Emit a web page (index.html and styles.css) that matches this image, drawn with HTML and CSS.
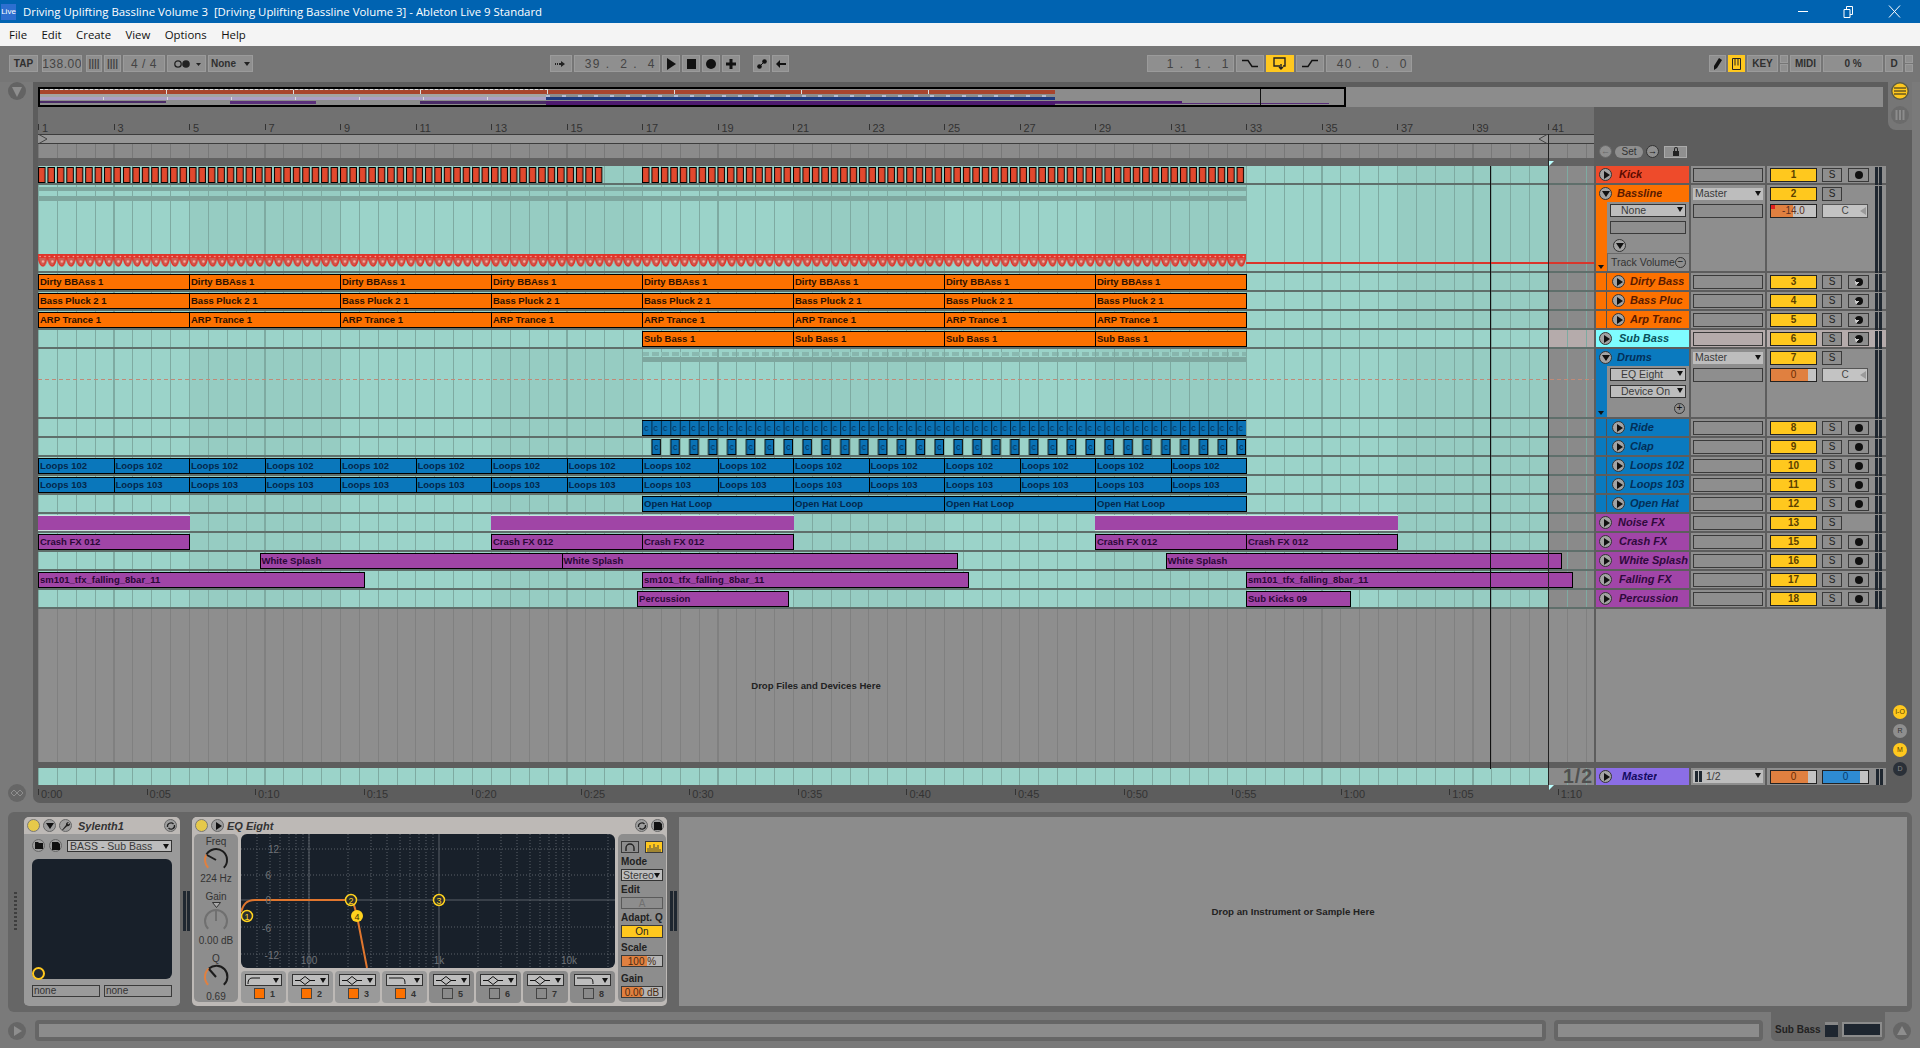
FILE: index.html
```html
<!DOCTYPE html>
<html lang="en">
<head>
  <meta charset="UTF-8" />
  <title>Driving Uplifting Bassline Volume 3 - Ableton Live 9 Standard</title>
  <link rel="stylesheet" href="styles.css">
</head>
<body>
  <header class="titlebar">
    <span class="live-logo">Live</span>
    <span class="title-text">Driving Uplifting Bassline Volume 3&nbsp; [Driving Uplifting Bassline Volume 3] - Ableton Live 9 Standard</span>
    <svg class="win-ctl" width="120" height="23" viewBox="0 0 120 23" fill="none" stroke="#fff">
      <path d="M8 11.5H18"/>
      <path d="M54 9.500h6v8h-6zM56.500 9.500v-3h6v8h-2.500"/>
      <path d="M99 5.500L110 17.500M110 5.500L99 17.500"/>
    </svg>
  </header>
  <nav class="menubar">
    <span>File</span><span>Edit</span><span>Create</span><span>View</span><span>Options</span><span>Help</span>
  </nav>

  <!-- control bar -->
  <section class="toolbar">
    <div class="btn w29 strong">TAP</div>
    <div class="btn w40 ml4 big">138.00</div>
    <div class="btn w16 ml4 big bars">||||</div>
    <div class="btn w17 big bars">||||</div>
    <div class="btn w42 big">4 / 4</div>
    <div class="btn w39">
      <svg width="30" height="10" viewBox="0 0 30 10" fill="#222"><circle cx="6" cy="5" r="3.200" fill="none" stroke="#222" stroke-width="1.300"/><circle cx="14" cy="5" r="3.800"/><path d="M24 4h5l-2.500 3z"/></svg>
    </div>
    <div class="btn w45 strong combo-btn">None</div>

    <div class="btn w22 gap-center"><svg width="12" height="8" viewBox="0 0 12 8" fill="#222"><path d="M0 3h1v2H0zM2 3h1v2H2zM4 3h2V1l4 3-4 3V5H4z"/></svg></div>
    <div class="btn w86 big num-right">39 .&nbsp; 2 .&nbsp; 4</div>
    <div class="btn w18"><svg width="10" height="12" viewBox="0 0 10 12" fill="#111"><path d="M1 0l9 6-9 6z"/></svg></div>
    <div class="btn w18"><svg width="9" height="10" viewBox="0 0 9 10" fill="#111"><path d="M0 0h9v10H0z"/></svg></div>
    <div class="btn w18"><svg width="10" height="10" viewBox="0 0 10 10" fill="#111"><circle cx="5" cy="5" r="5"/></svg></div>
    <div class="btn w18"><svg width="10" height="10" viewBox="0 0 10 10" fill="#111"><path d="M3.500 0h3v3.500H10v3H6.500V10h-3V6.500H0v-3h3.500z"/></svg></div>
    <div class="btn w17 ml13"><svg width="10" height="10" viewBox="0 0 10 10" fill="#111"><circle cx="2.500" cy="7.500" r="2.300"/><circle cx="7.500" cy="2.500" r="2.300"/><path d="M2 8L8 2" stroke="#111"/></svg></div>
    <div class="btn w17"><svg width="10" height="8" viewBox="0 0 10 8" fill="#111"><path d="M0 4l4-4v3h6v2H4v3z"/></svg></div>

    <div class="btn w87 big num-right gap-right">1 .&nbsp; 1 .&nbsp; 1</div>
    <div class="btn w28"><svg width="16" height="9" viewBox="0 0 16 9" fill="none" stroke="#111" stroke-width="1.400"><path d="M0 1.500h6l4 6h6"/></svg></div>
    <div class="btn w28 on"><svg width="14" height="13" viewBox="0 0 14 13" fill="none" stroke="#222" stroke-width="1.400"><path d="M7 9H1V1h11v8h-2"/><path d="M8 7v5M6 10l2 2 2-2"/></svg></div>
    <div class="btn w28"><svg width="16" height="9" viewBox="0 0 16 9" fill="none" stroke="#111" stroke-width="1.400"><path d="M0 7.500h6l4-6h6"/></svg></div>
    <div class="btn w86 big num-right">40 .&nbsp; 0 .&nbsp; 0</div>

    <div class="btn w17 gap-edit"><svg width="9" height="12" viewBox="0 0 9 12" fill="#111"><path d="M6 0l3 2-5 8-3 2 0-4z"/></svg></div>
    <div class="btn w17 on"><svg width="9" height="12" viewBox="0 0 9 12" fill="none" stroke="#222"><path d="M.5.5h8v11h-8zM3 .5v7M6 .5v7"/></svg></div>
    <div class="btn w31 strong">KEY</div>
    <div class="mini-stack"><i></i><i></i></div>
    <div class="btn w31 strong">MIDI</div>
    <div class="btn w60 strong">0 %</div>
    <div class="btn w18 strong">D</div>
    <div class="mini-stack"><i></i><i></i></div>
  </section>

  <main class="main">
    <aside class="side-left">
      <svg width="18" height="18" viewBox="0 0 18 18"><circle cx="9" cy="9" r="9" fill="#636363"/><path d="M4 5h10l-5 10z" fill="#8e8e8e"/></svg>
      <svg width="18" height="18" viewBox="0 0 18 18" fill="none"><circle cx="9" cy="9" r="9" fill="#666"/><path d="M3 9l3-3 3 3-3 3zM9 9l3-3 3 3-3 3z" stroke="#8e8e8e"/></svg>
    </aside>

    <section class="arrange">
      <div class="side-tab">
        <svg width="18" height="18" viewBox="0 0 18 18"><circle cx="9" cy="9" r="9" fill="#5c5c44"/><circle cx="9" cy="9" r="7.500" fill="#ffc81e"/><path d="M3 6h12M3 9h12M3 12h12" stroke="#6a5a20" stroke-width="1.300"/></svg>
        <svg width="18" height="18" viewBox="0 0 18 18"><circle cx="9" cy="9" r="9" fill="#6b6b6b"/><path d="M4.500 4v10h2V4zM8 4v10h2V4zM11.500 4v10h2V4z" fill="#8c8c8c"/></svg>
      </div>

      <div class="overview">
        <div class="ov-frame">
          <i class="ov ov-dash"></i>
          <i class="ov ov-red"></i>
          <i class="ov ov-grey"></i>
          <i class="ov ov-navy"></i>
          <i class="ov ov-dash2"></i>
          <i class="ov ov-lav"></i>
          <i class="ov ov-p1"></i>
          <i class="ov ov-p2"></i>
          <i class="ov ov-p3"></i>
          <i class="ov ov-p4"></i>
          <i class="ov ov-p5"></i>
          <i class="ov ov-p6"></i>
          <i class="ov ov-line"></i>
        </div>
      </div>

      <div class="top-row">
        <div class="timeline">
          <div class="ruler">
            <span style="--b:0">1</span><span style="--b:2">3</span><span style="--b:4">5</span><span style="--b:6">7</span><span style="--b:8">9</span><span style="--b:10">11</span><span style="--b:12">13</span><span style="--b:14">15</span><span style="--b:16">17</span><span style="--b:18">19</span><span style="--b:20">21</span><span style="--b:22">23</span><span style="--b:24">25</span><span style="--b:26">27</span><span style="--b:28">29</span><span style="--b:30">31</span><span style="--b:32">33</span><span style="--b:34">35</span><span style="--b:36">37</span><span style="--b:38">39</span><span style="--b:40">41</span>
          </div>
          <div class="brace">
            <svg class="brace-svg" width="1510" height="10" viewBox="0 0 1510 10" fill="none" stroke="#444"><path d="M1 .5L9 5 1 9.500M1509 .5L1501 5l8 4.500"/></svg>
          </div>
          <div class="locators"></div>
          <div class="band"></div>
        </div>
        <div class="setbar">
          <i class="round-btn dim">&#8592;</i>
          <span class="set-pill">Set</span>
          <i class="round-btn">&#8594;</i>
          <span class="lock">
            <svg width="8" height="9" viewBox="0 0 8 9" fill="#222"><path d="M1 4h6v5H1zM2 4V2a2 2 0 0 1 4 0v2H5V2a1 1 0 0 0-2 0v2z"/></svg>
          </span>
        </div>
      </div>

      <div class="track t-red">
        <div class="lane"><svg class="pat" x="0" y="0" width="1510" height="17"><defs><pattern id="kick" width="9.4375" height="17" patternUnits="userSpaceOnUse"><rect x=".5" y="1.500" width="6.500" height="15" fill="#e2492e" stroke="#000"/></pattern></defs><rect width="566" height="17" fill="url(#kick)"/><rect x="604" width="604" height="17" fill="url(#kick)"/></svg></div>
        <div class="head"><i class="fold"></i><b>Kick</b></div>
        <div class="send"><div class="box"></div></div>
        <div class="mix"><div class="num">1</div><div class="solo">S</div><div class="arm"></div><div class="meter"></div></div>
      </div>

      <div class="track t-orange tall-bass">
        <div class="lane">
          <i class="note-band b1"></i><i class="note-band b2"></i>
          <svg class="auto-svg" width="1208" height="14" viewBox="0 0 1208 14"><defs><pattern id="saw" width="9.4375" height="14" patternUnits="userSpaceOnUse"><path d="M0 2C1 8 3 12 5 12S8 8 9.440 2Z" fill="#e0352b" fill-opacity=".75" stroke="#e0352b" stroke-width="1.500"/><circle cx="5" cy="7.500" r="1.200" fill="#f3b6a8"/><circle cx="2" cy="2.500" r=".8" fill="#f3b6a8"/><circle cx="7" cy="2.500" r=".8" fill="#f3b6a8"/></pattern></defs><rect y="0" width="1208" height="4" fill="#e0352b"/><rect width="1208" height="14" fill="url(#saw)"/></svg>
          <i class="auto-line"></i>
        </div>
        <div class="head group">
          <div class="head-name"><i class="fold open"></i><b>Bassline</b></div>
          <div class="head-body">
            <div class="combo">None</div>
            <div class="box"></div>
            <i class="fold open small-fold"></i>
            <div class="auto-row">Track Volume<i class="round-mini">&#8722;</i></div>
            <i class="group-arrow"></i>
          </div>
        </div>
        <div class="send"><div class="combo master">Master</div><div class="box"></div></div>
        <div class="mix"><div class="num">2</div><div class="solo">S</div><div class="arm-none"></div><div class="meter"></div><div class="vol v14">-14.0</div><div class="pan">C</div></div>
      </div>

      <div class="track t-orange nest">
        <div class="lane">
          <div class="clip" style="--s:1;--n:4">Dirty BBAss 1</div><div class="clip" style="--s:5;--n:4">Dirty BBAss 1</div><div class="clip" style="--s:9;--n:4">Dirty BBAss 1</div><div class="clip" style="--s:13;--n:4">Dirty BBAss 1</div><div class="clip" style="--s:17;--n:4">Dirty BBAss 1</div><div class="clip" style="--s:21;--n:4">Dirty BBAss 1</div><div class="clip" style="--s:25;--n:4">Dirty BBAss 1</div><div class="clip" style="--s:29;--n:4">Dirty BBAss 1</div>
        </div>
        <div class="head"><i class="fold"></i><b>Dirty Bass</b></div>
        <div class="send"><div class="box"></div></div>
        <div class="mix"><div class="num">3</div><div class="solo">S</div><div class="arm midi"></div><div class="meter"></div></div>
      </div>

      <div class="track t-orange nest">
        <div class="lane">
          <div class="clip" style="--s:1;--n:4">Bass Pluck 2 1</div><div class="clip" style="--s:5;--n:4">Bass Pluck 2 1</div><div class="clip" style="--s:9;--n:4">Bass Pluck 2 1</div><div class="clip" style="--s:13;--n:4">Bass Pluck 2 1</div><div class="clip" style="--s:17;--n:4">Bass Pluck 2 1</div><div class="clip" style="--s:21;--n:4">Bass Pluck 2 1</div><div class="clip" style="--s:25;--n:4">Bass Pluck 2 1</div><div class="clip" style="--s:29;--n:4">Bass Pluck 2 1</div>
        </div>
        <div class="head"><i class="fold"></i><b>Bass Pluc</b></div>
        <div class="send"><div class="box"></div></div>
        <div class="mix"><div class="num">4</div><div class="solo">S</div><div class="arm midi"></div><div class="meter"></div></div>
      </div>

      <div class="track t-orange nest">
        <div class="lane">
          <div class="clip" style="--s:1;--n:4">ARP Trance 1</div><div class="clip" style="--s:5;--n:4">ARP Trance 1</div><div class="clip" style="--s:9;--n:4">ARP Trance 1</div><div class="clip" style="--s:13;--n:4">ARP Trance 1</div><div class="clip" style="--s:17;--n:4">ARP Trance 1</div><div class="clip" style="--s:21;--n:4">ARP Trance 1</div><div class="clip" style="--s:25;--n:4">ARP Trance 1</div><div class="clip" style="--s:29;--n:4">ARP Trance 1</div>
        </div>
        <div class="head"><i class="fold"></i><b>Arp Tranc</b></div>
        <div class="send"><div class="box"></div></div>
        <div class="mix"><div class="num">5</div><div class="solo">S</div><div class="arm midi"></div><div class="meter"></div></div>
      </div>

      <div class="track t-cyan selected">
        <div class="lane">
          <div class="clip orange" style="--s:17;--n:4">Sub Bass 1</div><div class="clip orange" style="--s:21;--n:4">Sub Bass 1</div><div class="clip orange" style="--s:25;--n:4">Sub Bass 1</div><div class="clip orange" style="--s:29;--n:4">Sub Bass 1</div>
        </div>
        <div class="head"><i class="fold"></i><b>Sub Bass</b></div>
        <div class="send"><div class="box"></div></div>
        <div class="mix"><div class="num">6</div><div class="solo">S</div><div class="arm midi"></div><div class="meter"></div></div>
      </div>

      <div class="track t-blue tall-drums">
        <div class="lane">
          <i class="note-band d1"></i><i class="note-band d2"></i>
          <i class="dash-line"></i>
        </div>
        <div class="head group">
          <div class="head-name"><i class="fold open"></i><b>Drums</b></div>
          <div class="head-body">
            <div class="combo">EQ Eight</div>
            <div class="combo">Device On</div>
            <i class="round-mini plus">+</i>
            <i class="group-arrow"></i>
          </div>
        </div>
        <div class="send"><div class="combo master">Master</div><div class="box"></div></div>
        <div class="mix"><div class="num">7</div><div class="solo">S</div><div class="arm-none"></div><div class="meter"></div><div class="vol v0">0</div><div class="pan">C</div></div>
      </div>

      <div class="track t-blue nest">
        <div class="lane"><svg class="pat ride" width="604" height="17"><defs><pattern id="ride" width="9.4375" height="17" patternUnits="userSpaceOnUse"><rect width="9.440" height="17" y="1" fill="#0a72b5"/><path d="M.5 1v17" stroke="#042a48"/><text x="2" y="12" class="pat-text">c</text></pattern></defs><rect width="604" height="17" fill="url(#ride)"/><path d="M0 1.500H604M0 16.500H604" stroke="#000"/></svg></div>
        <div class="head"><i class="fold"></i><b>Ride</b></div>
        <div class="send"><div class="box"></div></div>
        <div class="mix"><div class="num">8</div><div class="solo">S</div><div class="arm"></div><div class="meter"></div></div>
      </div>

      <div class="track t-blue nest">
        <div class="lane"><svg class="pat ride" width="604" height="17"><defs><pattern id="clap" width="18.875" height="17" patternUnits="userSpaceOnUse"><rect x="9.900" y="1.500" width="8.500" height="15" fill="#0a72b5" stroke="#000"/><text x="12" y="12" class="pat-text">c</text></pattern></defs><rect width="604" height="17" fill="url(#clap)"/></svg></div>
        <div class="head"><i class="fold"></i><b>Clap</b></div>
        <div class="send"><div class="box"></div></div>
        <div class="mix"><div class="num">9</div><div class="solo">S</div><div class="arm"></div><div class="meter"></div></div>
      </div>

      <div class="track t-blue nest">
        <div class="lane">
          <div class="clip" style="--s:1;--n:2">Loops 102</div><div class="clip" style="--s:3;--n:2">Loops 102</div><div class="clip" style="--s:5;--n:2">Loops 102</div><div class="clip" style="--s:7;--n:2">Loops 102</div><div class="clip" style="--s:9;--n:2">Loops 102</div><div class="clip" style="--s:11;--n:2">Loops 102</div><div class="clip" style="--s:13;--n:2">Loops 102</div><div class="clip" style="--s:15;--n:2">Loops 102</div><div class="clip" style="--s:17;--n:2">Loops 102</div><div class="clip" style="--s:19;--n:2">Loops 102</div><div class="clip" style="--s:21;--n:2">Loops 102</div><div class="clip" style="--s:23;--n:2">Loops 102</div><div class="clip" style="--s:25;--n:2">Loops 102</div><div class="clip" style="--s:27;--n:2">Loops 102</div><div class="clip" style="--s:29;--n:2">Loops 102</div><div class="clip" style="--s:31;--n:2">Loops 102</div>
        </div>
        <div class="head"><i class="fold"></i><b>Loops 102</b></div>
        <div class="send"><div class="box"></div></div>
        <div class="mix"><div class="num">10</div><div class="solo">S</div><div class="arm"></div><div class="meter"></div></div>
      </div>

      <div class="track t-blue nest">
        <div class="lane">
          <div class="clip" style="--s:1;--n:2">Loops 103</div><div class="clip" style="--s:3;--n:2">Loops 103</div><div class="clip" style="--s:5;--n:2">Loops 103</div><div class="clip" style="--s:7;--n:2">Loops 103</div><div class="clip" style="--s:9;--n:2">Loops 103</div><div class="clip" style="--s:11;--n:2">Loops 103</div><div class="clip" style="--s:13;--n:2">Loops 103</div><div class="clip" style="--s:15;--n:2">Loops 103</div><div class="clip" style="--s:17;--n:2">Loops 103</div><div class="clip" style="--s:19;--n:2">Loops 103</div><div class="clip" style="--s:21;--n:2">Loops 103</div><div class="clip" style="--s:23;--n:2">Loops 103</div><div class="clip" style="--s:25;--n:2">Loops 103</div><div class="clip" style="--s:27;--n:2">Loops 103</div><div class="clip" style="--s:29;--n:2">Loops 103</div><div class="clip" style="--s:31;--n:2">Loops 103</div>
        </div>
        <div class="head"><i class="fold"></i><b>Loops 103</b></div>
        <div class="send"><div class="box"></div></div>
        <div class="mix"><div class="num">11</div><div class="solo">S</div><div class="arm"></div><div class="meter"></div></div>
      </div>

      <div class="track t-blue nest">
        <div class="lane">
          <div class="clip" style="--s:17;--n:4">Open Hat Loop</div><div class="clip" style="--s:21;--n:4">Open Hat Loop</div><div class="clip" style="--s:25;--n:4">Open Hat Loop</div><div class="clip" style="--s:29;--n:4">Open Hat Loop</div>
        </div>
        <div class="head"><i class="fold"></i><b>Open Hat</b></div>
        <div class="send"><div class="box"></div></div>
        <div class="mix"><div class="num">12</div><div class="solo">S</div><div class="arm"></div><div class="meter"></div></div>
      </div>

      <div class="track t-purple">
        <div class="lane">
          <div class="clip plain" style="--s:1;--n:4"></div><div class="clip plain" style="--s:13;--n:8"></div><div class="clip plain" style="--s:29;--n:8"></div>
        </div>
        <div class="head group-top"><i class="fold"></i><b>Noise FX</b></div>
        <div class="send"><div class="box"></div></div>
        <div class="mix"><div class="num">13</div><div class="solo">S</div><div class="arm-none"></div><div class="meter"></div></div>
      </div>

      <div class="track t-purple">
        <div class="lane">
          <div class="clip" style="--s:1;--n:4">Crash FX 012</div><div class="clip" style="--s:13;--n:4">Crash FX 012</div><div class="clip" style="--s:17;--n:4">Crash FX 012</div><div class="clip" style="--s:29;--n:4">Crash FX 012</div><div class="clip" style="--s:33;--n:4">Crash FX 012</div>
        </div>
        <div class="head"><i class="fold"></i><b>Crash FX</b></div>
        <div class="send"><div class="box"></div></div>
        <div class="mix"><div class="num">15</div><div class="solo">S</div><div class="arm"></div><div class="meter"></div></div>
      </div>

      <div class="track t-purple">
        <div class="lane">
          <div class="clip" style="--s:6.87;--n:8">White Splash</div><div class="clip" style="--s:14.87;--n:10.48">White Splash</div><div class="clip" style="--s:30.87;--n:10.48">White Splash</div>
        </div>
        <div class="head"><i class="fold"></i><b>White Splash</b></div>
        <div class="send"><div class="box"></div></div>
        <div class="mix"><div class="num">16</div><div class="solo">S</div><div class="arm"></div><div class="meter"></div></div>
      </div>

      <div class="track t-purple">
        <div class="lane">
          <div class="clip" style="--s:1;--n:8.63">sm101_tfx_falling_8bar_11</div><div class="clip" style="--s:17;--n:8.63">sm101_tfx_falling_8bar_11</div><div class="clip" style="--s:33;--n:8.63">sm101_tfx_falling_8bar_11</div>
        </div>
        <div class="head"><i class="fold"></i><b>Falling FX</b></div>
        <div class="send"><div class="box"></div></div>
        <div class="mix"><div class="num">17</div><div class="solo">S</div><div class="arm"></div><div class="meter"></div></div>
      </div>

      <div class="track t-purple">
        <div class="lane">
          <div class="clip" style="--s:16.87;--n:4">Percussion</div><div class="clip" style="--s:33;--n:2.75">Sub Kicks 09</div>
        </div>
        <div class="head"><i class="fold"></i><b>Percussion</b></div>
        <div class="send"><div class="box"></div></div>
        <div class="mix"><div class="num">18</div><div class="solo">S</div><div class="arm"></div><div class="meter"></div></div>
      </div>

      <div class="drop-row">
        <div class="drop-lane">Drop Files and Devices Here</div>
        <div class="drop-head"></div>
      </div>
      <div class="band-row"><div class="band-lane"></div></div>

      <div class="track t-master master-row">
        <div class="lane"><span class="ratio">1/2</span></div>
        <div class="head"><i class="fold"></i><b>Master</b></div>
        <div class="send"><div class="combo master cue"><i class="cue-meter"></i>1/2</div></div>
        <div class="mix"><div class="vol v0">0</div><div class="vol vb">0</div><div class="meter"></div></div>
      </div>

      <div class="time-ruler">
        <span style="--t:0">0:00</span><span style="--t:1">0:05</span><span style="--t:2">0:10</span><span style="--t:3">0:15</span><span style="--t:4">0:20</span><span style="--t:5">0:25</span><span style="--t:6">0:30</span><span style="--t:7">0:35</span><span style="--t:8">0:40</span><span style="--t:9">0:45</span><span style="--t:10">0:50</span><span style="--t:11">0:55</span><span style="--t:12">1:00</span><span style="--t:13">1:05</span><span style="--t:14">1:10</span>
      </div>

      <!-- lines over the lanes -->
      <i class="line-play"></i>
      <i class="line-end"></i>
      <i class="corner c-top"></i>
      <i class="corner c-bot"></i>

      <div class="side-right">
        <i class="dot yellow">I-O</i>
        <i class="dot grey">R</i>
        <i class="dot yellow">M</i>
        <i class="dot dark">D</i>
      </div>
    </section>
  </main>

  <!-- device view -->
  <section class="detail">
    <div class="grip"></div>
    <div class="device synth">
      <div class="dev-title">
        <i class="led"></i><i class="fold open grey"></i>
        <i class="fold grey wrench"><svg width="10" height="10" viewBox="0 0 10 10" fill="#222"><path d="M1 9l4-5a2.500 2.500 0 0 1 3-3L6.500 2.500 7.500 3.500 9 2a2.500 2.500 0 0 1-3 3.200L2 9z"/></svg></i>
        <b>Sylenth1</b>
        <i class="fold grey ico-r"><svg width="10" height="10" viewBox="0 0 10 10" fill="none" stroke="#222" stroke-width="1.300"><path d="M1.500 6a3.500 3.500 0 0 1 6-3M8.500 4a3.500 3.500 0 0 1-6 3"/></svg></i>
      </div>
      <div class="synth-body">
        <div class="synth-top">
          <i class="fold grey"><svg width="8" height="7" viewBox="0 0 8 7" fill="#111"><path d="M0 0h3l1 1h4v6H0z"/></svg></i>
          <i class="fold grey"><svg width="8" height="8" viewBox="0 0 8 8" fill="#111"><path d="M0 0h6l2 2v6H0z"/></svg></i>
          <div class="combo preset">BASS - Sub Bass</div>
        </div>
        <div class="xy"><i class="xy-dot"></i></div>
        <div class="macros"><div>none</div><div>none</div></div>
      </div>
    </div>
    <div class="meter dev-meter"></div>
    <div class="device eq">
      <div class="dev-title">
        <i class="led"></i><i class="fold grey"></i>
        <b>EQ Eight</b>
        <i class="fold grey ico-r"><svg width="10" height="10" viewBox="0 0 10 10" fill="none" stroke="#222" stroke-width="1.300"><path d="M1.500 6a3.500 3.500 0 0 1 6-3M8.500 4a3.500 3.500 0 0 1-6 3"/></svg></i>
        <i class="fold grey"><svg width="8" height="8" viewBox="0 0 8 8" fill="#111"><path d="M0 0h6l2 2v6H0z"/></svg></i>
      </div>
      <div class="eq-body">
        <div class="eq-knobs">
          <span>Freq</span>
          <svg class="knob k1" width="28" height="28" viewBox="0 0 28 28" fill="none" stroke-width="2"><path d="M6.200 21.800A11 11 0 0 1 4.500 8.500" stroke="#e08040"/><path d="M4.500 8.500A11 11 0 1 1 21.800 21.800" stroke="#1c1c1c"/><path d="M14 14L5 9" stroke="#1c1c1c"/></svg>
          <span>224 Hz</span>
          <span class="mt5">Gain</span>
          <svg class="knob-tri" width="9" height="6" viewBox="0 0 9 6" fill="#aaa" stroke="#333"><path d="M.5.500h8L4.500 5.500z"/></svg>
          <svg class="knob" width="28" height="28" viewBox="0 0 28 28" fill="none" stroke-width="2"><path d="M6.200 21.800A11 11 0 1 1 21.800 21.800" stroke="#707070"/><path d="M14 14V3" stroke="#707070"/></svg>
          <span>0.00 dB</span>
          <span class="mt5">Q</span>
          <svg class="knob" width="28" height="28" viewBox="0 0 28 28" fill="none" stroke-width="2"><path d="M6.200 21.800A11 11 0 0 1 7 5.500" stroke="#e08040"/><path d="M7 5.500A11 11 0 1 1 21.800 21.800" stroke="#1c1c1c"/><path d="M14 14L7 6" stroke="#1c1c1c"/></svg>
          <span>0.69</span>
        </div>
        <div class="eq-mid">
          <svg class="eq-graph" width="374" height="134" viewBox="0 0 374 134" fill="none">
            <path class="g-dot" d="M16 0V134M29 0V134M39 0V134M48 0V134M55 0V134M62 0V134M68 0V134M107 0V134M130 0V134M146 0V134M159 0V134M169 0V134M178 0V134M185 0V134M192 0V134M237 0V134M260 0V134M276 0V134M289 0V134M299 0V134M308 0V134M315 0V134M322 0V134M328 0V134M367 0V134"/>
            <path class="g-dot" d="M0 15H374M0 41H374M0 93H374M0 120H374"/>
            <path class="g-line" d="M0 66H374M68 0V134M198 0V134"/>
            <path d="M0 78C2 71 5 66 14 66H108C112 66 113 70 116 82L126 134" stroke="#e0762e" stroke-width="2"/>
            <g class="g-label">
              <text x="38" y="19" text-anchor="end">12</text><text x="30" y="45" text-anchor="end">6</text><text x="30" y="70" text-anchor="end">0</text><text x="30" y="98" text-anchor="end">-6</text><text x="38" y="125" text-anchor="end">-12</text>
              <text x="68" y="130" text-anchor="middle">100</text><text x="198" y="130" text-anchor="middle">1k</text><text x="328" y="130" text-anchor="middle">10k</text>
            </g>
            <g class="node ring"><circle cx="6" cy="82" r="5.500"/><text x="6" y="85.500">1</text></g>
            <g class="node ring"><circle cx="110" cy="66" r="5.500"/><text x="110" y="69.500">2</text></g>
            <g class="node ring"><circle cx="198" cy="66" r="5.500"/><text x="198" y="69.500">3</text></g>
            <g class="node solid"><circle cx="116" cy="82" r="6"/><text x="116" y="85.500">4</text></g>
          </svg>
          <div class="bands">
            <div class="band-cell on"><div class="combo filt"><svg width="26" height="9" viewBox="0 0 26 9" fill="none" stroke="#111"><path d="M1 8c0-5 2-6 5-6h7"/></svg></div><div class="band-foot"><i class="chk on"></i><b>1</b></div></div>
            <div class="band-cell on"><div class="combo filt"><svg width="26" height="9" viewBox="0 0 26 9" fill="none" stroke="#111"><path d="M1 4.500h5l5-4 5 4 5 0M6 4.500l5 4 5-4"/></svg></div><div class="band-foot"><i class="chk on"></i><b>2</b></div></div>
            <div class="band-cell on"><div class="combo filt"><svg width="26" height="9" viewBox="0 0 26 9" fill="none" stroke="#111"><path d="M1 4.500h5l5-4 5 4 5 0M6 4.500l5 4 5-4"/></svg></div><div class="band-foot"><i class="chk on"></i><b>3</b></div></div>
            <div class="band-cell on"><div class="combo filt"><svg width="26" height="9" viewBox="0 0 26 9" fill="none" stroke="#111"><path d="M1 2h12c3 0 4 1 4 6"/></svg></div><div class="band-foot"><i class="chk on"></i><b>4</b></div></div>
            <div class="band-cell"><div class="combo filt"><svg width="26" height="9" viewBox="0 0 26 9" fill="none" stroke="#111"><path d="M1 4.500h5l5-4 5 4 5 0M6 4.500l5 4 5-4"/></svg></div><div class="band-foot"><i class="chk"></i><b>5</b></div></div>
            <div class="band-cell"><div class="combo filt"><svg width="26" height="9" viewBox="0 0 26 9" fill="none" stroke="#111"><path d="M1 4.500h5l5-4 5 4 5 0M6 4.500l5 4 5-4"/></svg></div><div class="band-foot"><i class="chk"></i><b>6</b></div></div>
            <div class="band-cell"><div class="combo filt"><svg width="26" height="9" viewBox="0 0 26 9" fill="none" stroke="#111"><path d="M1 4.500h5l5-4 5 4 5 0M6 4.500l5 4 5-4"/></svg></div><div class="band-foot"><i class="chk"></i><b>7</b></div></div>
            <div class="band-cell"><div class="combo filt"><svg width="26" height="9" viewBox="0 0 26 9" fill="none" stroke="#111"><path d="M1 2h12c3 0 4 1 4 6"/></svg></div><div class="band-foot"><i class="chk"></i><b>8</b></div></div>
          </div>
        </div>
        <div class="eq-side">
          <div class="eq-btns">
            <div class="bx"><svg width="10" height="9" viewBox="0 0 10 9" fill="none" stroke="#222" stroke-width="1.400"><path d="M1 8V5a4 4 0 0 1 8 0v3"/></svg></div>
            <div class="bx yellow"><svg width="14" height="9" viewBox="0 0 14 9" stroke="#444"><path d="M1 9V5M3 9V2M5 9V5M7 9V1M9 9V4M11 9V2M13 9V6"/></svg></div>
          </div>
          <label>Mode</label><div class="combo stereo">Stereo</div>
          <label>Edit</label><div class="bx wide dim">A</div>
          <label>Adapt. Q</label><div class="bx wide yellow">On</div>
          <label class="lb-scale">Scale</label><div class="bx wide fill-scale">100 %</div>
          <label class="lb-gain">Gain</label><div class="bx wide fill-gain">0.00 dB</div>
        </div>
      </div>
    </div>
    <div class="meter dev-meter"></div>
    <div class="dropzone">Drop an Instrument or Sample Here</div>
  </section>

  <footer class="status">
    <svg class="st-ico" width="18" height="18" viewBox="0 0 18 18"><circle cx="9" cy="9" r="9" fill="#666"/><path d="M6 4l8 5-8 5z" fill="#8e8e8e"/></svg>
    <div class="st-field f1"></div>
    <div class="st-field f2"></div>
    <div class="st-tab">
      <b>Sub Bass</b>
      <i class="st-mini"></i>
      <i class="st-cpu"></i>
    </div>
    <svg class="st-ico" width="18" height="18" viewBox="0 0 18 18"><circle cx="9" cy="9" r="9" fill="#666"/><path d="M9 4l5 9H4z" fill="#8e8e8e"/></svg>
  </footer>
</body>
</html>
```

FILE: styles.css
```css
* {
  box-sizing: border-box;
}
:root {
  --bar: 37.75px;
  --teal: #9ad2c8;
  --ui: "Liberation Sans", Arial, sans-serif;
}
body {
  margin: 0;
  width: 1920px;
  height: 1048px;
  overflow: hidden;
  display: flex;
  flex-direction: column;
  background: #7a7a7a;
  font-family: var(--ui);
  color: #222;
}
i {
  font-style: normal;
  display: block;
}

/* window chrome */
.titlebar {
  height: 23px;
  flex: none;
  background: #0063b1;
  color: #fff;
  display: flex;
  align-items: center;
  font: 11.400px "Open Sans", sans-serif;
  padding: 0 10px 0 1px;
}
.live-logo {
  width: 15px;
  height: 16px;
  background: #2d6fd0;
  font: 8px var(--ui);
  text-align: center;
  line-height: 16px;
  margin-right: 7px;
}
.title-text {
  flex: 1;
}
.win-ctl {
  flex: none;
}
.menubar {
  height: 23px;
  flex: none;
  background: #f4f4f4;
  display: flex;
  align-items: center;
  padding-left: 9px;
  gap: 14.400px;
  font: 11.400px "Open Sans", sans-serif;
  color: #111;
}

/* control bar */
.toolbar {
  height: 36px;
  flex: none;
  background: #767676;
  display: flex;
  align-items: flex-start;
  padding: 9px 0 0 9px;
  gap: 2px;
}
.btn {
  height: 17px;
  flex: none;
  background: #8f8f8f;
  border: 1px solid #9b9b9b;
  display: flex;
  align-items: center;
  justify-content: center;
  font-size: 10px;
  color: #2c2c2c;
  white-space: nowrap;
  overflow: hidden;
}
.btn.big {
  font-size: 12px;
  letter-spacing: .5px;
  color: #444;
}
.btn.bars {
  font-size: 10px;
  font-weight: bold;
  letter-spacing: 0;
}
.btn.strong {
  font-weight: bold;
  color: #303030;
}
.btn.on {
  background: #ffc81e;
  border-color: #ffc81e;
}
.btn.num-right {
  justify-content: flex-end;
  padding-right: 3px;
  letter-spacing: 1.500px;
}
.combo-btn::after {
  content: "";
  margin-left: 8px;
  border: 3px solid transparent;
  border-top: 4px solid #222;
  border-bottom: 0;
}
.w16 { width: 16px; }
.w17 { width: 17px; }
.w18 { width: 18px; }
.w22 { width: 22px; }
.w28 { width: 28px; }
.w29 { width: 29px; }
.w31 { width: 31px; }
.w39 { width: 39px; }
.w40 { width: 40px; }
.w42 { width: 42px; }
.w45 { width: 45px; }
.w60 { width: 60px; }
.w86 { width: 86px; }
.w87 { width: 87px; }
.ml4 { margin-left: 2px; }
.ml13 { margin-left: 11px; }
.gap-center { margin-left: 295px; }
.gap-right { margin-left: 356px; }
.gap-edit { margin-left: 295px; }
.mini-stack {
  width: 8px;
  height: 17px;
  display: flex;
  flex-direction: column;
  gap: 1px;
  flex: none;
}
.mini-stack i {
  flex: 1;
  background: #8f8f8f;
  border: 1px solid #9b9b9b;
}

/* arrangement */
.main {
  height: 721px;
  flex: none;
  display: flex;
}
.side-left {
  width: 33px;
  flex: none;
  display: flex;
  flex-direction: column;
  justify-content: space-between;
  align-items: center;
  padding: 0 0 1px 2px;
  margin-right: 0;
}
.side-left svg {
  margin-top: 0;
  margin-right: 2px;
}
.arrange {
  width: 1879px;
  flex: none;
  background: #5d5d5d;
  border-radius: 0 0 7px 7px;
  position: relative;
  padding: 5px 0 0 5px;
  display: flex;
  flex-direction: column;
}
.side-tab {
  position: absolute;
  right: 0;
  top: 0;
  width: 24px;
  height: 48px;
  background: #767676;
  border-radius: 0 0 0 8px;
  padding-top: 0;
  display: flex;
  flex-direction: column;
  align-items: center;
  gap: 6px;
}
.overview {
  height: 20px;
  width: 1845px;
  flex: none;
  background: #8c8c8c;
}
.ov-frame {
  width: 1308px;
  height: 20px;
  border: 2px solid #000;
  position: relative;
}
.ov {
  position: absolute;
}
.ov-dash { left: 0; top: 0; width: 508px; height: 1px; background: repeating-linear-gradient(90deg, #ddd 0 3px, transparent 3px 5px); }
.ov-red { left: 0; top: 1px; width: 1015px; height: 4px; background: repeating-linear-gradient(90deg, #a8452e 0 126px, #ddd 126px 127px); }
.ov-grey { left: 0; top: 5px; width: 506px; height: 3px; background: #a4a4a4; }
.ov-navy { left: 506px; top: 6px; width: 509px; height: 5px; background: #1f3a80; }
.ov-dash2 { left: 506px; top: 6px; width: 509px; height: 2px; background: repeating-linear-gradient(90deg, #b9bdd0 0 4px, #8c8c8c 4px 16px); }
.ov-lav { left: 0; top: 8px; width: 506px; height: 3px; background: repeating-linear-gradient(90deg, #ab9fc6 0 63px, #ddd 63px 64px); }
.ov-p1 { left: 0; top: 12px; width: 126px; height: 2px; background: #4a2b66; }
.ov-p2 { left: 190px; top: 12px; width: 86px; height: 3px; background: #5a2f7a; }
.ov-p3 { left: 380px; top: 12px; width: 126px; height: 3px; background: #4a2b66; }
.ov-p4 { left: 506px; top: 12px; width: 509px; height: 4px; background: #4e1a70; }
.ov-p5 { left: 1015px; top: 12px; width: 127px; height: 2px; background: #4e1a70; }
.ov-p6 { left: 1015px; top: 14px; width: 274px; height: 1px; background: #5a2f7a; }
.ov-line { left: 1220px; top: 0; width: 1px; height: 16px; background: #111; }

.top-row {
  display: flex;
  height: 59px;
  flex: none;
}
.timeline {
  width: 1556px;
  flex: none;
}
.ruler {
  height: 27px;
  background: #717171;
  position: relative;
}
.ruler span {
  position: absolute;
  left: calc(var(--b) * var(--bar));
  bottom: 0;
  height: 12px;
  font-size: 11px;
  line-height: 12px;
  padding-left: 4px;
  color: #333;
}
.ruler span::before,
.time-ruler span::before {
  content: "";
  position: absolute;
  left: 0;
  top: 2px;
  width: 1px;
  height: 6px;
  background: #333;
}
.brace {
  height: 10px;
  background: linear-gradient(90deg, #969696 0 1510px, #8b8b8b 1510px);
  border-top: 1px solid #3c3c3c;
  border-bottom: 1px solid #3c3c3c;
  position: relative;
}
.brace-svg {
  position: absolute;
  left: 0;
  top: -1px;
}
.locators {
  height: 14px;
  background: repeating-linear-gradient(90deg, #787878 0 1px, transparent 1px 18.875px), #8b8b8b;
}
.band {
  height: 8px;
  background: #626262;
}
.setbar {
  display: flex;
  align-items: center;
  height: 13px;
  margin: 38px 0 0 2px;
  padding-left: 3px;
  gap: 3px;
}
.round-btn {
  width: 13px;
  height: 13px;
  border-radius: 50%;
  background: #8f8f8f;
  border: 1px solid #333;
  font: bold 9px/10px var(--ui);
  text-align: center;
  color: #111;
}
.round-btn.dim {
  color: #666;
  border-color: #6a6a6a;
}
.set-pill {
  width: 28px;
  height: 12px;
  border-radius: 6px;
  background: #8f8f8f;
  font-size: 10px;
  line-height: 12px;
  text-align: center;
  color: #333;
}
.lock {
  width: 23px;
  height: 12px;
  background: #8f8f8f;
  border: 1px solid #aaa;
  margin-left: 2px;
  display: flex;
  align-items: center;
  justify-content: center;
}

/* tracks */
.track {
  display: flex;
  height: 19px;
  flex: none;
}
.tall-bass { height: 88px; }
.tall-drums { height: 70px; }
.lane {
  width: 1556px;
  flex: none;
  position: relative;
  border-bottom: 2px solid #5f6f6b;
  background:
    repeating-linear-gradient(90deg, #7eaaa1 0 1px, transparent 1px 18.875px),
    linear-gradient(90deg, transparent 0 1510px, #8a8a8a 1510px),
    repeating-linear-gradient(90deg, #9bd3c9 0 151px, #96ccc2 151px 302px);
}
.selected .lane {
  background:
    repeating-linear-gradient(90deg, #7eaaa1 0 1px, transparent 1px 18.875px),
    linear-gradient(90deg, transparent 0 1510px, #b5abab 1510px),
    #9bd3c9;
}
.head {
  width: 93px;
  flex: none;
  margin-left: 2px;
  display: flex;
  align-items: center;
  height: 17px;
  padding-left: 3px;
  background: var(--c);
}
.head b {
  margin-left: 7px;
  font: italic bold 11px/17px var(--ui);
  color: var(--ink);
  white-space: nowrap;
  overflow: hidden;
}
.nest .head {
  padding-left: 16px;
  background: linear-gradient(90deg, var(--c) 0 10px, #0002 10px 11px, var(--c) 11px);
}
.nest .head b {
  margin-left: 5px;
}
.head.group {
  display: block;
  height: auto;
  padding-left: 0;
  background: linear-gradient(90deg, var(--c) 0 11px, #8e8e8e 11px);
  margin-bottom: 2px;
}
.head.group-top b {
  margin-left: 6px;
}
.head-name {
  height: 17px;
  background: var(--c);
  display: flex;
  align-items: center;
  padding-left: 3px;
}
.head-name b {
  margin-left: 5px;
}
.head-body {
  position: relative;
  padding: 2px 3px 0 14px;
  display: flex;
  flex-direction: column;
  gap: 4px;
  height: calc(100% - 17px);
}
.head-body .combo {
  height: 13px;
  line-height: 11px;
}
.head-body .combo::after {
  top: 2px;
}
.head-body .box {
  width: 100%;
  height: 13px;
  margin: 0;
}
.small-fold {
  margin: 1px 0 0 3px;
}
.auto-row {
  position: absolute;
  left: 11px;
  right: 0;
  bottom: 0;
  height: 18px;
  border-top: 1px solid #6a6a6a;
  border-left: 1px solid #6a6a6a;
  font-size: 10.500px;
  line-height: 17px;
  padding-left: 3px;
  color: #333;
  white-space: nowrap;
}
.round-mini {
  width: 11px;
  height: 11px;
  border: 1px solid #333;
  border-radius: 50%;
  font: 10px/8px var(--ui);
  text-align: center;
  color: #111;
  background: #8e8e8e;
}
.auto-row .round-mini {
  position: absolute;
  right: 3px;
  top: 3px;
}
.round-mini.plus {
  position: absolute;
  right: 4px;
  bottom: 3px;
}
.group-arrow {
  position: absolute;
  left: 2px;
  bottom: 2px;
  border: 3.500px solid transparent;
  border-top: 4px solid #111;
  border-bottom: 0;
}
.fold {
  width: 13px;
  height: 13px;
  flex: none;
  border-radius: 50%;
  background: #a3a3a3;
  border: 1px solid #333;
  position: relative;
  display: flex;
  align-items: center;
  justify-content: center;
}
.fold:empty::after {
  content: "";
  border-left: 6px solid #111;
  border-top: 4px solid transparent;
  border-bottom: 4px solid transparent;
  margin-left: 2px;
}
.fold.open:empty::after {
  border-top: 6px solid #111;
  border-left: 4px solid transparent;
  border-right: 4px solid transparent;
  border-bottom: 0;
  margin: 1px 0 0;
}
.fold.grey {
  background: #9e9e9e;
  border-color: #666;
}
.send {
  width: 74px;
  flex: none;
  margin-left: 2px;
  padding: 2px 2px 0;
  background: #8e8e8e;
  display: flex;
  flex-direction: column;
  gap: 3px;
  height: calc(100% - 2px);
}
.box {
  height: 14px;
  flex: none;
  border: 1px solid #3a3a3a;
  background: #8e8e8e;
}
.selected .send,
.selected .send .box,
.selected .mix {
  background: #b5abab;
}
.mix {
  width: 119px;
  flex: none;
  margin-left: 2px;
  padding: 2px 0 0 3px;
  background: #8e8e8e;
  height: calc(100% - 2px);
  display: grid;
  grid-template-columns: 47px 20px 21px 7px;
  grid-auto-rows: 14px;
  column-gap: 5px;
  row-gap: 3px;
}
.num {
  background: #ffc81e;
  border: 1px solid #222;
  font: bold 10px/12px var(--ui);
  text-align: center;
  color: #5a4000;
}
.solo {
  background: #8e8e8e;
  border: 1px solid #3a3a3a;
  font: 10px/12px var(--ui);
  text-align: center;
  color: #222;
}
.arm {
  margin-left: 1px;
  width: 21px;
  background: #8e8e8e;
  border: 1px solid #3a3a3a;
  position: relative;
}
.arm::after {
  content: "";
  position: absolute;
  left: 6px;
  top: 2px;
  width: 8px;
  height: 8px;
  border-radius: 50%;
  background: #111;
}
.arm.midi::after {
  background: conic-gradient(#111 0 60%, #ccc 60% 78%, #111 78%);
}
.meter {
  margin-left: 2px;
  width: 7px;
  grid-column: 4;
  grid-row: 1 / span 9;
  height: 100%;
  background: linear-gradient(90deg, #1f2730 0 3px, transparent 3px 4px, #1f2730 4px);
}
.mix .meter {
  height: calc(100% + 2px);
  margin-top: -1px;
}
.vol {
  border: 1px solid #222;
  font: 10px/12px var(--ui);
  text-align: center;
  color: #6a2a00;
  background: #c3c3c3;
}
.vol.v14 {
  background: linear-gradient(90deg, #e08040 0 48%, #c3c3c3 48%);
  color: #5a3020;
  position: relative;
}
.vol.v14::before {
  content: "";
  position: absolute;
  left: 0;
  top: 0;
  width: 4px;
  height: 4px;
  background: #e02020;
}
.vol.v0 {
  background: linear-gradient(90deg, #e08040 0 83%, #c3c3c3 83%);
}
.vol.vb {
  color: #063a6a;
  background: linear-gradient(90deg, #2e8bd2 0 83%, #c3c3c3 83%);
}
.pan {
  grid-column: 2 / 4;
  border: 1px solid #555;
  font: 10px/12px var(--ui);
  text-align: center;
  color: #444;
  background: #c3c3c3;
  position: relative;
}
.pan::after {
  content: "";
  position: absolute;
  right: 1px;
  top: 2px;
  border: 4px solid transparent;
  border-right: 6px solid #9a9a9a;
  border-left: 0;
}

.t-red { --c: #ee4b2b; --ink: #5c0c00; }
.t-orange { --c: #fd7100; --ink: #5a1a00; --clip: #fd7100; }
.t-cyan { --c: #7ffcff; --ink: #06505a; }
.t-blue { --c: #0a7abf; --ink: #032f58; --clip: #0a77bb; }
.t-purple { --c: #a145a8; --ink: #2f0a3c; --clip: #a045a6; }
.t-master { --c: #8b6ee6; --ink: #120a60; }

/* clips */
.clip {
  position: absolute;
  top: 1px;
  left: calc((var(--s) - 1) * var(--bar));
  width: calc(var(--n) * var(--bar) + 1px);
  height: 16px;
  background: var(--clip);
  border: 1px solid #000;
  font: bold 9.500px/14px var(--ui);
  padding-left: 1px;
  color: #2c1000;
  white-space: nowrap;
  overflow: hidden;
}
.clip.orange {
  background: #fd7100;
}
.t-blue .clip {
  color: #03284c;
}
.t-purple .clip {
  color: #2a0836;
}
.clip.plain {
  border: 0;
  border-top: 1px solid #cfe3df;
  border-bottom: 1px solid #cfe3df;
}
.pat {
  position: absolute;
  left: 0;
  top: 0;
}
.pat.ride {
  left: 604px;
}
.pat-text {
  font: 9px var(--ui);
  fill: #03284c;
}
.note-band {
  position: absolute;
  left: 0;
  width: 1208px;
  background: #7ea79f;
}
.b1 { top: 2px; height: 4px; }
.b2 { top: 11px; height: 5px; }
.d1, .d2 {
  left: 604px;
  width: 604px;
}
.d1 {
  top: 3px;
  height: 4px;
  background: repeating-linear-gradient(90deg, #7ea79f 0 7px, #9ad2c8 7px 10px);
  opacity: .6;
}
.d2 { top: 8px; height: 5px; }
.auto-svg {
  position: absolute;
  left: 0;
  top: 69px;
}
.auto-line {
  position: absolute;
  left: 1208px;
  right: 0;
  top: 77px;
  height: 2px;
  background: #d9352b;
}
.dash-line {
  position: absolute;
  left: 0;
  right: 0;
  top: 30px;
  height: 1px;
  background: repeating-linear-gradient(90deg, #c08a78 0 4px, transparent 4px 7px);
}

/* combos */
.combo {
  height: 14px;
  flex: none;
  background: #bdbdbd;
  border: 1px solid #333;
  font-size: 10.500px;
  line-height: 12px;
  color: #3a3a3a;
  position: relative;
  padding-left: 10px;
  white-space: nowrap;
  overflow: hidden;
}
.combo::after {
  content: "";
  position: absolute;
  right: 2px;
  top: 3px;
  border: 3.500px solid transparent;
  border-top: 5px solid #111;
  border-bottom: 0;
}
.combo.master {
  height: 12px;
  line-height: 11px;
  padding-left: 2px;
  border: 0;
  margin-bottom: 1px;
  margin-top: 1px;
}
.combo.cue {
  display: flex;
  align-items: center;
  gap: 4px;
  margin-top: 0;
  height: 13px;
}
.cue-meter {
  width: 7px;
  height: 11px;
  background: linear-gradient(90deg, #1f2730 0 3px, transparent 3px 4px, #1f2730 4px);
}

.drop-row {
  flex: 1;
  display: flex;
  min-height: 0;
}
.drop-lane {
  width: 1556px;
  flex: none;
  display: flex;
  align-items: center;
  justify-content: center;
  background: repeating-linear-gradient(90deg, #808080 0 1px, transparent 1px 18.875px), #8e8e8e;
  font: bold 9.600px var(--ui);
  color: #222;
  padding-bottom: 0;
}
.drop-head {
  width: 290px;
  margin-left: 2px;
  background: #8e8e8e;
}
.band-row {
  height: 6px;
  flex: none;
}
.master-row {
  height: 17px;
}
.master-row .lane {
  border: 0;
  background:
    repeating-linear-gradient(90deg, #7eaaa1 0 1px, transparent 1px 18.875px),
    linear-gradient(90deg, transparent 0 1510px, #8a8a8a 1510px),
    #9bd3c9;
  height: 17px;
}
.master-row .send,
.master-row .mix {
  height: 17px;
}
.master-row .send {
  padding-top: 2px;
}
.master-row .mix {
  grid-template-columns: 47px 47px 7px;
}
.master-row .meter {
  grid-column: 3;
  grid-row: 1;
}
.master-row .head b {
  margin-left: 10px;
}
.ratio {
  position: absolute;
  right: 1px;
  top: -2px;
  font: bold 19.500px/20px var(--ui);
  letter-spacing: 1px;
  color: #505050;
}
.time-ruler {
  height: 18px;
  flex: none;
  position: relative;
  width: 1556px;
  color: #333;
}
.time-ruler span {
  position: absolute;
  left: calc(var(--t) * 108.55px);
  top: 2px;
  height: 12px;
  padding-left: 3px;
  font-size: 11px;
  line-height: 15px;
}
.line-play,
.line-end {
  position: absolute;
  width: 1px;
  background: #111;
}
.line-play {
  left: 1457px;
  top: 84px;
  height: 603px;
}
.line-end {
  left: 1515px;
  top: 52px;
  height: 651px;
  background: #222;
}
.corner {
  position: absolute;
  left: 1516px;
  border-left: 5px solid #bff;
  border-bottom: 5px solid transparent;
}
.c-top { top: 79px; }
.c-bot { top: 703px; }
.side-right {
  position: absolute;
  left: 1860px;
  top: 623px;
  display: flex;
  flex-direction: column;
  gap: 5px;
}
.dot {
  width: 14px;
  height: 14px;
  border-radius: 50%;
  font: 7px/14px var(--ui);
  text-align: center;
}
.dot.yellow { background: #ffc81e; color: #5a4000; }
.dot.grey { background: #8e8e8e; color: #333; }
.dot.dark { background: #2a3038; color: #888; }

/* device view */
.detail {
  height: 200px;
  flex: none;
  margin: 9px 8px 0;
  background: #666;
  border-radius: 6px;
  display: flex;
  padding: 5px 5px 6px 16px;
  position: relative;
}
.grip {
  position: absolute;
  left: 6px;
  top: 80px;
  width: 3px;
  height: 38px;
  background: repeating-linear-gradient(180deg, #3e3e3e 0 2px, transparent 2px 4px);
}
.device {
  background: #9a9a9a;
  border-radius: 5px;
  flex: none;
  overflow: hidden;
}
.synth {
  width: 156px;
}
.eq {
  width: 475px;
  background: #bdb9b6;
}
.dev-title {
  height: 17px;
  background: #bdb9b6;
  display: flex;
  align-items: center;
  padding: 0 3px 0 3px;
  gap: 3px;
}
.dev-title b {
  margin-left: 3px;
  flex: 1;
  font: italic bold 11px var(--ui);
  color: #333;
}
.eq .dev-title b {
  margin-left: 0;
}
.led {
  width: 13px;
  height: 13px;
  border-radius: 50%;
  background: #e6c94a;
  border: 1px solid #777;
}
.synth-body {
  padding: 4px 8px;
  background: #9a9a9a;
  height: 171px;
}
.synth-top {
  display: flex;
  align-items: center;
  gap: 4px;
  height: 15px;
}
.combo.preset {
  flex: 1;
  height: 12px;
  line-height: 10px;
  padding-left: 2px;
  margin-left: 1px;
  margin-top: 1px;
}
.xy {
  height: 120px;
  margin-top: 6px;
  background: #18202a;
  border-radius: 6px;
  position: relative;
}
.xy-dot {
  position: absolute;
  left: 0;
  bottom: -1px;
  width: 13px;
  height: 13px;
  border-radius: 50%;
  border: 2px solid #ffc81e;
  background: #222a34;
}
.macros {
  display: flex;
  gap: 4px;
  margin-top: 6px;
}
.macros div {
  flex: 1;
  height: 12px;
  border: 1px solid #3a3a3a;
  font-size: 10px;
  line-height: 10px;
  padding-left: 1px;
  color: #333;
}
.dev-meter {
  width: 7px;
  height: 40px;
  margin: 74px 2px 0 3px;
  flex: none;
}
.eq-body {
  display: flex;
  height: 171px;
  padding: 0 2px;
  gap: 3px;
}
.eq-knobs {
  width: 44px;
  flex: none;
  background: #8d8d8d;
  border-radius: 5px;
  height: 168px;
  display: flex;
  flex-direction: column;
  align-items: center;
  font-size: 10px;
  color: #333;
  padding-top: 2px;
}
.mt5 {
  margin-top: 7px;
}
.knob {
  flex: none;
  margin-top: -1px;
}
.knob.k1 {
  margin-bottom: -1px;
}
.knob-tri {
  flex: none;
}
.eq-mid {
  width: 374px;
  flex: none;
}
.eq-graph {
  display: block;
  background: #18202a;
  border-radius: 6px;
}
.g-dot {
  stroke: #5a6068;
  stroke-dasharray: 1 2;
}
.g-line {
  stroke: #5a6068;
}
.g-label {
  font: 10px var(--ui);
  fill: #6f7378;
}
.node text {
  font: 9px var(--ui);
  text-anchor: middle;
}
.node.ring circle {
  fill: #2b2f30;
  stroke: #ffd21e;
  stroke-width: 1.500;
}
.node.ring text {
  fill: #ffd21e;
}
.node.solid circle {
  fill: #ffd21e;
}
.node.solid text {
  fill: #3a2f00;
}
.bands {
  display: flex;
  gap: 2px;
  margin-top: 3px;
}
.band-cell {
  width: 45px;
  height: 32px;
  flex: none;
  background: #8a8a8a;
  border-radius: 4px;
  padding: 3px 4px;
}
.band-cell.on {
  background: #9a9a9a;
}
.combo.filt {
  height: 12px;
  padding: 1px 0 0 1px;
  display: flex;
}
.combo.filt::after {
  top: 3px;
}
.band-foot {
  display: flex;
  align-items: center;
  gap: 5px;
  margin: 2px 0 0 9px;
  font-size: 9px;
  color: #333;
}
.chk {
  width: 11px;
  height: 11px;
  border: 1px solid #444;
}
.chk.on {
  background: #fd7100;
}
.eq-side {
  width: 48px;
  flex: none;
  background: #8d8d8d;
  border-radius: 5px;
  height: 168px;
  padding: 7px 3px 0;
  font-size: 10px;
  color: #222;
}
.eq-side label {
  display: block;
  font-weight: bold;
  font-size: 10px;
  line-height: 12px;
  margin: 3px 0 1px;
}
.eq-side .lb-scale {
  margin-top: 4px;
}
.eq-side .lb-gain {
  margin-top: 6px;
}
.eq-btns {
  display: flex;
  gap: 6px;
}
.bx {
  width: 18px;
  height: 12px;
  border: 1px solid #3a3a3a;
  background: #8d8d8d;
  display: flex;
  align-items: center;
  justify-content: center;
}
.bx.yellow {
  background: #ffc81e;
}
.bx.wide {
  width: 42px;
  font-size: 10px;
}
.bx.wide.yellow {
  height: 13px;
}
.bx.dim {
  color: #707070;
  border-color: #5a5a5a;
}
.combo.stereo {
  height: 12px;
  padding-left: 1px;
  line-height: 10px;
  width: 42px;
}
.fill-scale {
  background: linear-gradient(90deg, #e08040 0 62%, #b5b5b5 62%);
  color: #4a2a10;
}
.fill-gain {
  background: linear-gradient(90deg, #e08040 0 50%, #b5b5b5 50%);
  color: #4a2a10;
}
.dropzone {
  flex: 1;
  margin-left: 0;
  background: #8c8c8c;
  display: flex;
  align-items: center;
  justify-content: center;
  font: bold 9.700px var(--ui);
  color: #222;
}

/* status */
.status {
  flex: 1;
  display: flex;
  align-items: flex-start;
  padding: 0 0 0 8px;
  position: relative;
}
.st-ico {
  flex: none;
  margin-top: 10px;
}
.st-field {
  height: 21px;
  margin-top: 8px;
  background: #8c8c8c;
  border: 4px solid #666;
  border-radius: 4px;
}
.f1 {
  width: 1511px;
  margin-left: 9px;
}
.f2 {
  width: 209px;
  margin-left: 8px;
}
.st-tab {
  width: 114px;
  height: 29px;
  margin-left: 8px;
  background: #666;
  border-radius: 0 0 5px 5px;
  display: flex;
  align-items: center;
  padding: 5px 0 0 4px;
  gap: 4px;
  margin-right: 8px;
}
.st-tab b {
  font-size: 10px;
  color: #222;
  white-space: nowrap;
}
.st-mini {
  width: 13px;
  height: 15px;
  background: #1e2630;
  border-top: 3px solid #888;
}
.st-cpu {
  width: 40px;
  height: 15px;
  background: #1e2630;
  border: 2px solid #8c8c8c;
}
```
